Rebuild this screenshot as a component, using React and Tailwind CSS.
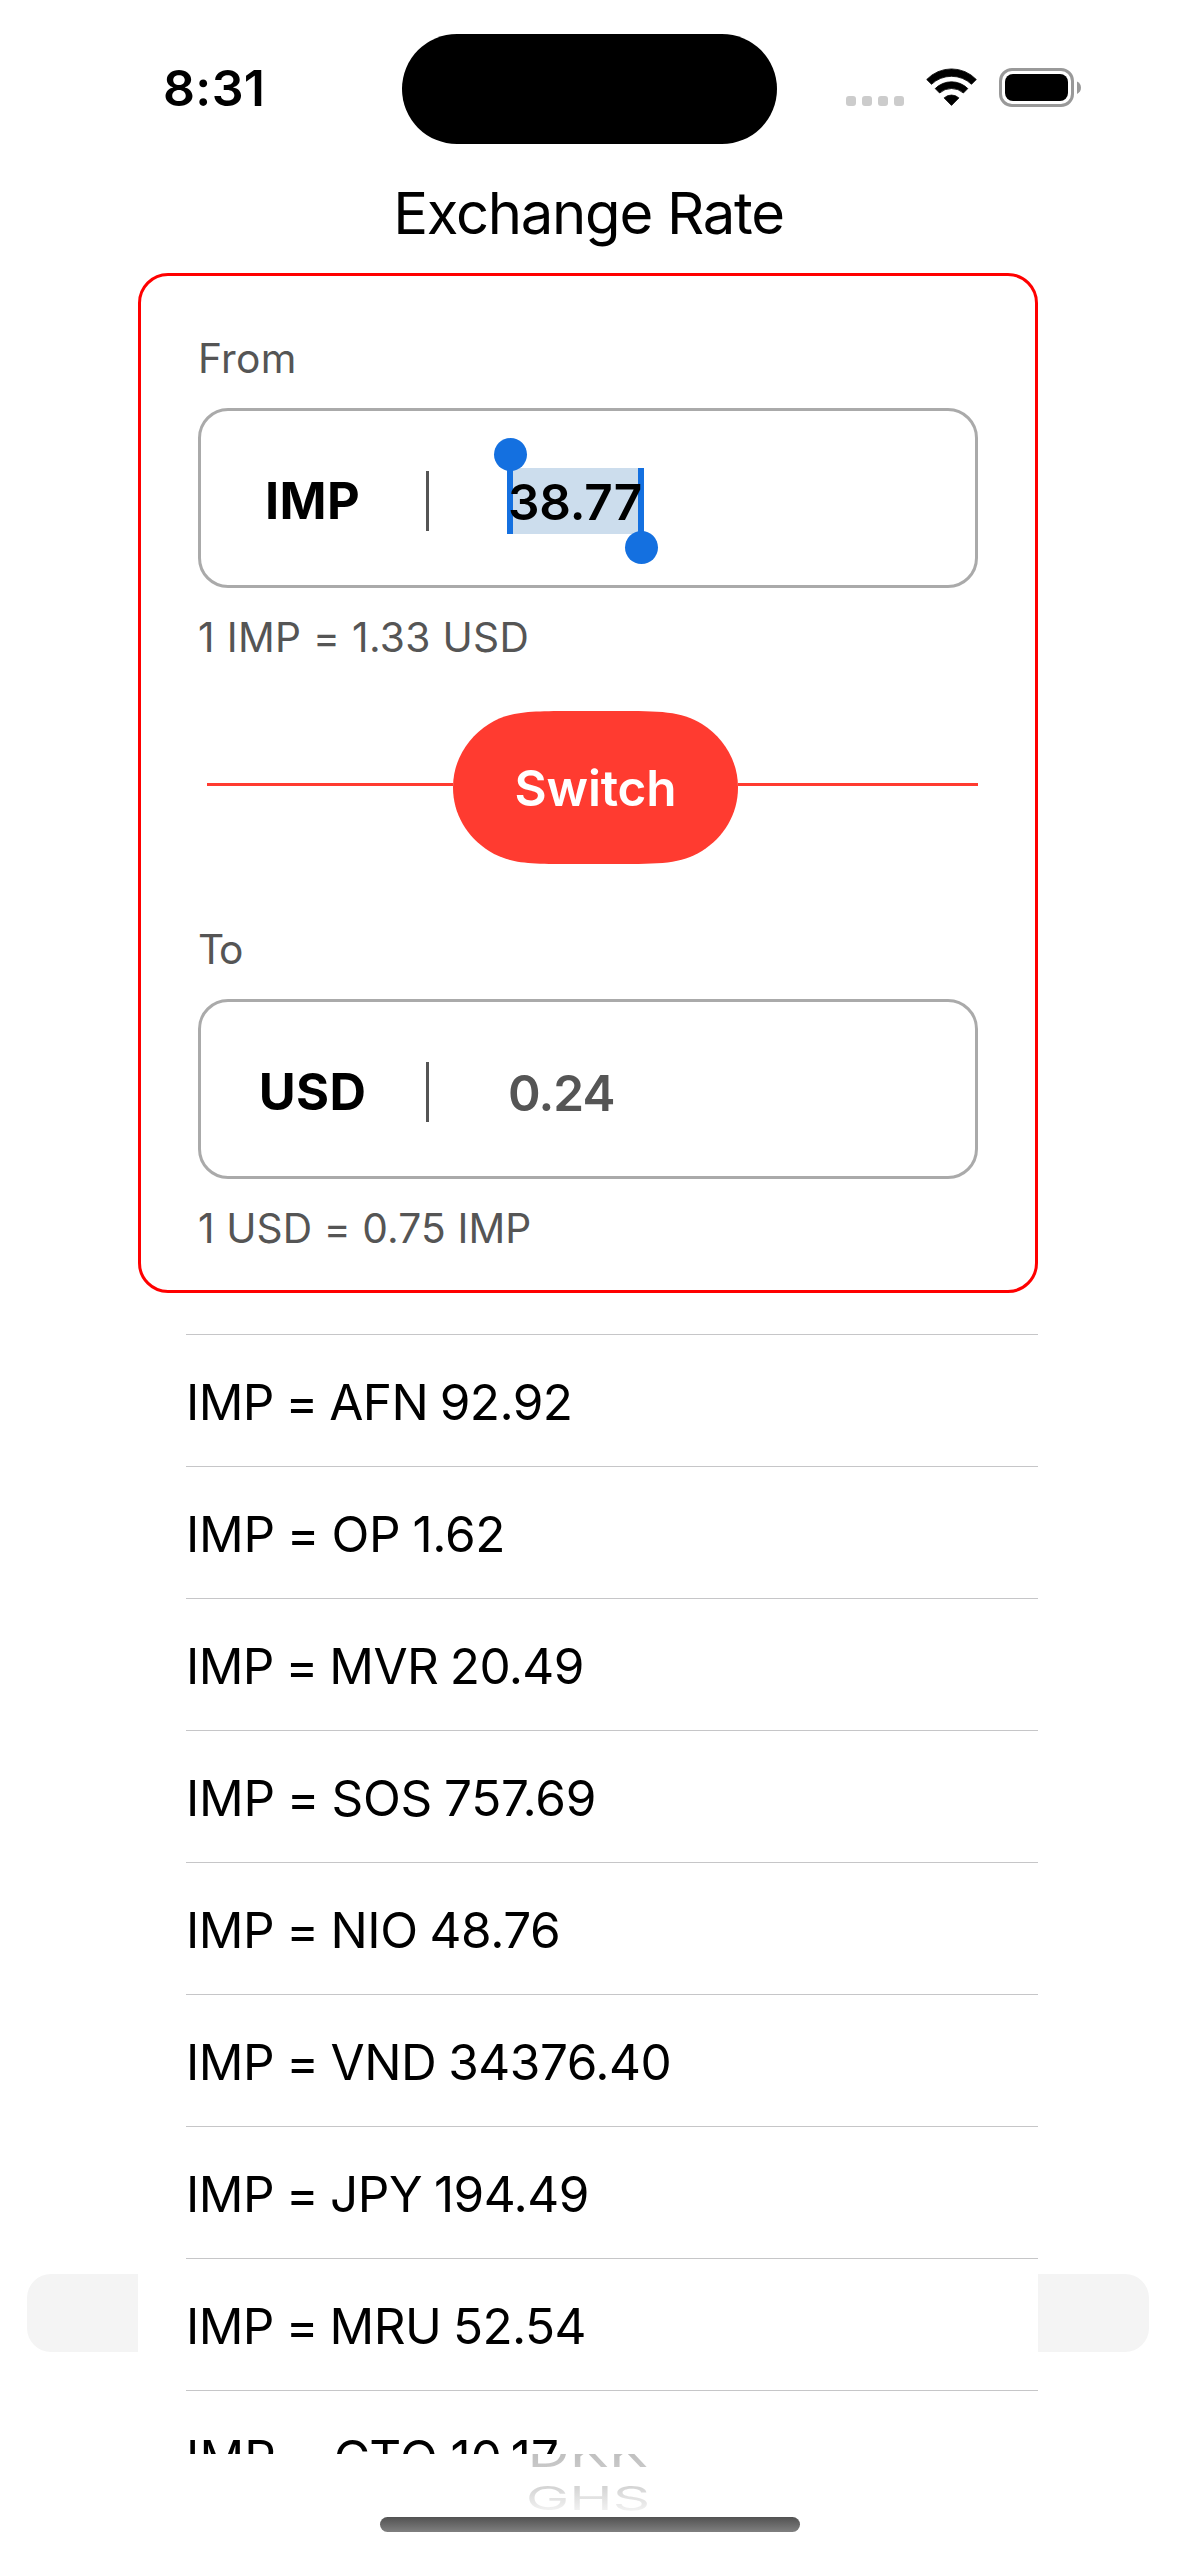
import React from 'react';

const RATES = [
  { text: 'IMP = AFN 92.92', tracking: 'tracking-[-0.65px]' },
  { text: 'IMP = OP 1.62', tracking: 'tracking-[-0.3px]' },
  { text: 'IMP = MVR 20.49', tracking: 'tracking-[-0.65px]' },
  { text: 'IMP = SOS 757.69', tracking: 'tracking-[-0.3px]' },
  { text: 'IMP = NIO 48.76', tracking: 'tracking-[-0.45px]' },
  { text: 'IMP = VND 34376.40', tracking: 'tracking-[-0.46px]' },
  { text: 'IMP = JPY 194.49', tracking: 'tracking-[-0.52px]' },
  { text: 'IMP = MRU 52.54', tracking: 'tracking-[-0.6px]' },
  { text: 'IMP = GTQ 10.17', tracking: 'tracking-[0.1px]' },
];

function SignalDots() {
  return (
    <svg width="58" height="39" viewBox="0 0 58 39" fill="#cccccc">
      <rect x="0" y="28" width="10" height="10" rx="3" />
      <rect x="16" y="28" width="10" height="10" rx="3" />
      <rect x="32" y="28" width="10" height="10" rx="3" />
      <rect x="48" y="28" width="10" height="10" rx="3" />
    </svg>
  );
}

function WifiIcon() {
  return (
    <svg
      width="51"
      height="39"
      viewBox="0 -1 51 39"
      stroke="#000"
      strokeWidth="0.8"
      strokeLinejoin="round"
    >
      <path d="M0.7 10.5A34.3 34.3 0 0 1 50.3 10.5L45.5 15.3A29 29 0 0 0 5.5 15.3Z" />
      <path d="M9.2 19.6A22.9 22.9 0 0 1 41.8 19.6L37.4 24A18 18 0 0 0 13.6 24Z" />
      <path d="M18.1 28.9A11 11 0 0 1 32.9 28.9L25.5 36.4Z" />
    </svg>
  );
}

function BatteryIcon() {
  return (
    <svg width="82" height="39" viewBox="0 0 82 39">
      <rect x="1.5" y="1.5" width="72" height="36" rx="11.5" fill="none" stroke="#999999" strokeWidth="3" />
      <rect x="6" y="6" width="63" height="27" rx="8" />
      <path d="M78 13.5C80.6 14.7 82 17 82 19.7S80.6 24.7 78 25.9Z" fill="#999999" />
    </svg>
  );
}

function StatusBar() {
  return (
    <header className="flex h-[176px] items-start">
      <div className="flex h-[176px] w-[402px] items-center pl-[163px] text-[50px] font-semibold tracking-[0.35px]">
        8:31
      </div>
      <div className="mt-[34px] h-[110px] w-[375px] rounded-full bg-black" />
      <div className="flex h-[175px] flex-1 items-center pl-[69px]">
        <SignalDots />
        <span className="ml-[22px]">
          <WifiIcon />
        </span>
        <span className="ml-[22px]">
          <BatteryIcon />
        </span>
      </div>
    </header>
  );
}

function CurrencyBox({ code, children }) {
  return (
    <div className="flex h-[180px] items-center rounded-[30px] border-[3px] border-[#aaaaaa] pt-[6px]">
      <div className="mr-[2px] w-[223px] text-center text-[50.5px] leading-[66px] font-bold tracking-[0.4px]">
        {code}
      </div>
      <div className="h-[60px] w-[3px] bg-[#555555]" />
      {children}
    </div>
  );
}

function SelectedValue({ value }) {
  return (
    <div className="relative ml-[78px] h-[66px] w-[137px] bg-[#ccdded]">
      <div className="absolute top-0 left-0 h-full w-[6px] bg-[#1470e0]" />
      <div className="absolute -top-[30px] -left-[13px] size-[33px] rounded-full bg-[#1470e0]" />
      <div className="absolute top-0 right-0 h-full w-[6px] bg-[#1470e0]" />
      <div className="absolute -right-[14px] -bottom-[30px] size-[33px] rounded-full bg-[#1470e0]" />
      <div className="relative pl-px text-[49.5px] leading-[68px] font-semibold tracking-[-0.16px]">
        {value}
      </div>
    </div>
  );
}

function SwitchRow() {
  return (
    <div className="mt-[25px] flex h-[153px] items-start pl-[9px]">
      <div className="mt-[72px] h-[3px] w-[246px] bg-[#ff3b30]" />
      <button className="relative h-[153px] w-[285px]">
        <svg className="absolute inset-0" width="285" height="153" viewBox="0 0 285 153" fill="#ff3b30">
          <path d="M0 76.5C0 50 14 27 36 13C57 0 78 0 122 0H163C207 0 228 0 249 13C271 27 285 50 285 76.5C285 103 271 126 249 140C228 153 207 153 163 153H122C78 153 57 153 36 140C14 126 0 103 0 76.5Z" />
        </svg>
        <span className="relative text-[49.5px] leading-[154px] font-semibold tracking-[-0.15px] text-white">
          Switch
        </span>
      </button>
      <div className="mt-[72px] h-[3px] w-[240px] bg-[#ff3b30]" />
    </div>
  );
}

function Converter() {
  return (
    <section className="mx-[138px] h-[1020px] w-[900px] rounded-[30px] border-[3px] border-[#ff0000] px-[57px] pt-[52px]">
      <div className="mb-[19px] text-[40.7px] leading-[61px] tracking-[0.28px] text-[#555555]">From</div>
      <CurrencyBox code="IMP">
        <SelectedValue value="38.77" />
      </CurrencyBox>
      <div className="h-[98px] text-[40.7px] leading-[100px] tracking-[0.32px] text-[#555555]">
        1 IMP = 1.33 USD
      </div>
      <SwitchRow />
      <div className="mt-[55px] mb-[19px] text-[40.7px] leading-[61px] tracking-[-2px] text-[#555555]">To</div>
      <CurrencyBox code="USD">
        <div className="ml-[79px] text-[49.5px] leading-[66px] font-semibold tracking-[-0.88px] text-[#555555]">
          <div className="pt-[2px]">0.24</div>
        </div>
      </CurrencyBox>
      <div className="h-[98px] text-[40.7px] leading-[100px] tracking-[0.1px] text-[#555555]">
        1 USD = 0.75 IMP
      </div>
    </section>
  );
}

function RateList() {
  return (
    <section className="mx-[138px] h-[1161px] w-[900px] overflow-hidden bg-white pt-[41px]">
      <ul className="pl-[48px] [word-spacing:-1.5px]">
        {RATES.map((rate) => (
          <li key={rate.text} className="h-[132px] border-t border-[#c6c6c8]">
            <div className={`text-[49.5px] leading-[134px] whitespace-nowrap ${rate.tracking}`}>{rate.text}</div>
          </li>
        ))}
      </ul>
    </section>
  );
}

/* Currency wheel that sits beneath the rate list. */
function PickerWheel() {
  return (
    <div className="absolute top-[2274px] left-[27px] flex w-[1122px] flex-col items-center">
      <div className="h-[78px] w-full rounded-[24px] bg-[#f4f4f4]" />
      <div className="mt-[82px] h-[34px]">
        <div className="origin-top scale-y-75 bg-linear-to-b from-[#b4b4b4] to-[#c9c9c9] bg-clip-text text-[58.5px] leading-[46px] text-transparent">
          DKK
        </div>
      </div>
      <div className="mt-[17px] h-[26px]">
        <div className="origin-top scale-y-[0.565] bg-linear-to-b from-[#d2d2d2] to-[#f2f2f2] bg-clip-text text-[58.5px] leading-[46px] text-transparent">
          GHS
        </div>
      </div>
    </div>
  );
}

export default function App() {
  return (
    <div className="relative h-[2556px] w-[1179px] overflow-hidden bg-white font-[Inter,sans-serif] text-black">
      <PickerWheel />
      <div className="relative">
        <StatusBar />
        <h1 className="h-[97px] pr-[2px] text-center text-[58px] leading-[74px] tracking-[-1.27px]">Exchange Rate</h1>
        <Converter />
        <RateList />
        <div className="mt-[63px] ml-[380px] h-[15px] w-[420px] rounded-full bg-linear-to-b from-[#525252] to-[#808080]" />
      </div>
    </div>
  );
}
